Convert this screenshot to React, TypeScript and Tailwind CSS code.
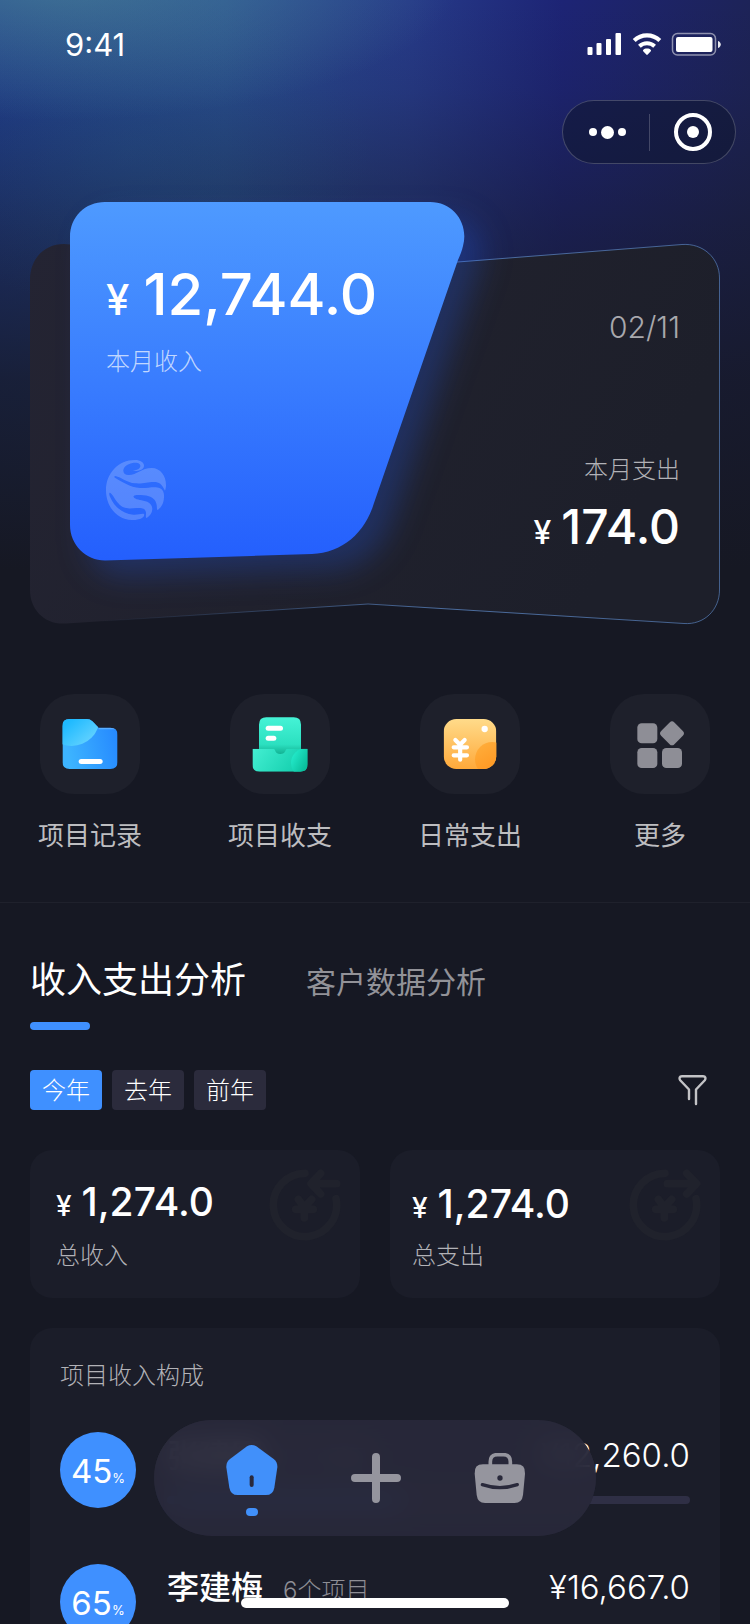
import type { ReactNode } from "react";

function StatusIcons() {
  return (
    <svg className="h-6 w-[136px]" viewBox="0 0 136 24" fill="none" aria-hidden="true">
      <g fill="#fff">
        <rect x="1.500" y="15" width="5" height="8" rx="1" />
        <rect x="10.500" y="11" width="5" height="12" rx="1" />
        <rect x="20" y="7" width="5" height="16" rx="1" />
        <rect x="29.500" y="1" width="5.500" height="22" rx="1" />
        <path d="M61 16.600c1.600 0 3 .5 3.800 1.300.4.400.4.900 0 1.300l-3.100 3.400c-.4.400-1 .4-1.400 0l-3.100-3.400c-.4-.4-.4-.9 0-1.300.8-.8 2.200-1.300 3.800-1.300z" />
      </g>
      <path d="M48.200 8.400a18.600 18.600 0 0 1 25.600 0" stroke="#fff" strokeWidth="4.200" />
      <path d="M53.400 14.200a11.200 11.200 0 0 1 15.200 0" stroke="#fff" strokeWidth="4" />
      <rect x="86.500" y="1.500" width="43" height="21.500" rx="5" stroke="#fff" strokeOpacity=".5" strokeWidth="1.500" />
      <rect x="90" y="5" width="36.500" height="15" rx="2" fill="#fff" />
      <path d="M132 9v7c1.800-.6 2.800-2 2.800-3.500S133.800 9.600 132 9z" fill="#fff" fillOpacity=".9" />
    </svg>
  );
}

function HeroShapes() {
  return (
    <svg
      className="absolute inset-0 h-full w-full overflow-visible"
      viewBox="0 0 690 422"
      preserveAspectRatio="none"
      aria-hidden="true"
    >
      <defs>
        <linearGradient id="back" x1="0" y1="0" x2="1" y2="0.3">
          <stop offset="0" stopColor="#242433" />
          <stop offset="0.55" stopColor="#20212d" />
          <stop offset="1" stopColor="#1d1f2a" />
        </linearGradient>
        <linearGradient id="edge" x1="0" y1="0" x2="1" y2="0">
          <stop offset="0.1" stopColor="#5b86c4" stopOpacity="0" />
          <stop offset="0.6" stopColor="#5b86c4" stopOpacity="0.75" />
          <stop offset="1" stopColor="#5b86c4" stopOpacity="0.65" />
        </linearGradient>
        <linearGradient id="front" x1="0" y1="0" x2="0" y2="1">
          <stop offset="0" stopColor="#4e9aff" />
          <stop offset="1" stopColor="#245ffd" />
        </linearGradient>
        <filter id="glow" x="-20%" y="-20%" width="150%" height="150%" colorInterpolationFilters="sRGB">
          <feDropShadow dx="18" dy="16" stdDeviation="15" floodColor="#2461ff" floodOpacity="0.25" />
        </filter>
      </defs>
      <path
        d="M0 78C0 57 14 42 34 42L338 67L652 42.500C673 41 689.500 56 689.500 76V388C689.500 408 674 423 654 421.500L338 402L36 421.500C15 423 0 408 0 388Z"
        fill="url(#back)"
        stroke="url(#edge)"
      />
      <path
        d="M75 0H400C424 0 439 22 433 44C432 49 430 53 428 58L344 301C335 331 312 351 282 352L75 358.500C56 358.500 40 343 40 323V35C40 15 55 0 75 0Z"
        fill="url(#front)"
        filter="url(#glow)"
      />
    </svg>
  );
}

function GlobeLogo() {
  return (
    <svg className="h-[60px] w-[60px]" viewBox="48 60 180 180" aria-hidden="true">
      <path
        fill="#fff"
        fillOpacity=".2"
        d="M48 150C48 100 85 60 135 60C152 60 162 68 162 77C162 88 148 94 128 93C145 90 152 84 151 77C150 68 135 68 128 69C110 72 100 82 100 92C100 100 106 105 116 105C140 105 155 84 185 84C212 84 228 108 228 135C228 142 227 147 225 152C215 132 208 126 192 126C170 126 160 132 135 130C110 128 95 112 76 108C72 108 72 112 76 114C95 125 120 142 150 144C175 145 195 138 210 145C220 150 223 160 222 172C221 190 215 202 203 210C200 210 201 200 200 195C197 178 185 168 160 166C150 165 135 164 131 168C128 176 145 180 160 182C178 184 187 195 187 208C186 220 180 228 170 234C166 234 168 226 168 218C167 206 158 203 140 204C115 206 100 208 85 190C75 180 68 162 60 158C57 158 57 164 60 170C70 195 95 222 130 224C145 225 155 220 162 222C165 228 158 234 150 237C140 240 130 240 125 240C80 238 48 200 48 150Z"
      />
    </svg>
  );
}

function FolderIcon() {
  return (
    <svg className="h-full w-full" viewBox="0 0 300 300" aria-hidden="true">
      <defs>
        <linearGradient id="folder" x1="0" y1="0.2" x2="1" y2="0">
          <stop offset="0" stopColor="#3db4ff" />
          <stop offset="1" stopColor="#2486ff" />
        </linearGradient>
        <linearGradient id="folderLight" gradientUnits="userSpaceOnUse" x1="80" y1="90" x2="140" y2="160">
          <stop offset="0" stopColor="#1fbaff" />
          <stop offset="1" stopColor="#66d3ff" />
        </linearGradient>
        <clipPath id="folderClip">
          <path d="M67 97Q67 75 89 75H140Q150 75 157 82L176 101H211Q233 101 233 123V203Q233 225 211 225H89Q67 225 67 203Z" />
        </clipPath>
      </defs>
      <g clipPath="url(#folderClip)">
        <rect x="67" y="75" width="166" height="150" fill="url(#folder)" />
        <path d="M176 101H233V106H176Z" fill="#7cc0ff" fillOpacity=".6" />
        <circle cx="95" cy="72" r="84" fill="url(#folderLight)" />
      </g>
      <rect x="116" y="195" width="72" height="15" rx="7.500" fill="#fff" />
    </svg>
  );
}

function TrayIcon() {
  return (
    <svg className="h-full w-full" viewBox="0 0 300 300" aria-hidden="true">
      <defs>
        <linearGradient id="sheet" x1="0" y1="0" x2="0" y2="1">
          <stop offset="0" stopColor="#45f3d6" />
          <stop offset="0.7" stopColor="#2ce0c0" />
          <stop offset="0.95" stopColor="#12b293" />
        </linearGradient>
        <linearGradient id="tray" x1="0" y1="0" x2="1" y2="0.3">
          <stop offset="0" stopColor="#44efd2" />
          <stop offset="1" stopColor="#14cfae" />
        </linearGradient>
        <linearGradient id="trayDot" gradientUnits="userSpaceOnUse" x1="185" y1="190" x2="233" y2="215">
          <stop offset="0" stopColor="#22e8c8" />
          <stop offset="1" stopColor="#08bb98" />
        </linearGradient>
        <clipPath id="trayClip">
          <path d="M67 164H130C137 164 134 180 151 180C168 180 165 164 172 164H233V211Q233 233 211 233H89Q67 233 67 211Z" />
        </clipPath>
      </defs>
      <path d="M87 92Q87 70 109 70H191Q213 70 213 92V186H87Z" fill="url(#sheet)" />
      <rect x="107" y="95" width="52" height="15" rx="7.500" fill="#fff" />
      <rect x="107" y="125" width="32" height="15" rx="7.500" fill="#fff" />
      <g clipPath="url(#trayClip)">
        <rect x="67" y="163" width="166" height="71" fill="url(#tray)" />
        <circle cx="228" cy="207" r="45" fill="url(#trayDot)" />
      </g>
    </svg>
  );
}

function DailyIcon() {
  return (
    <svg className="h-full w-full" viewBox="0 0 300 300" aria-hidden="true">
      <defs>
        <linearGradient id="daily" x1="0" y1="0" x2="0" y2="1">
          <stop offset="0" stopColor="#ffdb8a" />
          <stop offset="1" stopColor="#ffa93a" />
        </linearGradient>
        <linearGradient id="dailyDot" x1="0" y1="0" x2="0.6" y2="1">
          <stop offset="0" stopColor="#ffb03e" />
          <stop offset="1" stopColor="#ff921c" />
        </linearGradient>
        <clipPath id="dailyClip">
          <rect x="71" y="75" width="158" height="150" rx="38" />
        </clipPath>
      </defs>
      <g clipPath="url(#dailyClip)">
        <rect x="71" y="75" width="158" height="150" fill="url(#daily)" />
        <circle cx="217" cy="196" r="52" fill="url(#dailyDot)" />
      </g>
      <circle cx="194" cy="105" r="9.500" fill="#fff" />
      <path
        d="M106 138L120 152L134 138M101 160H141M101 184H141M120.500 152V197"
        stroke="#fff"
        strokeWidth="12.500"
        strokeLinecap="round"
        strokeLinejoin="round"
        fill="none"
      />
    </svg>
  );
}

function MoreIcon() {
  return (
    <svg className="h-full w-full" viewBox="0 0 300 300" fill="#8e8e96" aria-hidden="true">
      <rect x="82" y="88" width="60" height="60" rx="13" />
      <rect x="82" y="162" width="60" height="60" rx="13" />
      <rect x="156" y="162" width="60" height="60" rx="13" />
      <rect x="158" y="90" width="56" height="56" rx="10" transform="rotate(45 186 118)" />
    </svg>
  );
}

function FilterIcon() {
  return (
    <svg
      className="h-8 w-8"
      viewBox="0 0 32 32"
      fill="none"
      stroke="#c3c3c6"
      strokeWidth="2.400"
      strokeLinecap="round"
      strokeLinejoin="round"
      aria-hidden="true"
    >
      <path d="M13 25V15.500L4.200 6.200C2.900 4.400 3.500 2.200 5.900 2.200H27.100C29.500 2.200 30.100 4.400 28.800 6.200L20 15.500V30" />
    </svg>
  );
}

function FlowIcon({ outward }: { outward: boolean }) {
  return (
    <svg
      className="absolute top-[19px] right-[19px] h-[72px] w-[72px]"
      viewBox="57 57 216 216"
      fill="none"
      stroke="#20222c"
      strokeWidth="23"
      strokeLinecap="round"
      strokeLinejoin="round"
      aria-hidden="true"
    >
      <path d="M165 70A95 95 0 1 0 258 146" />
      <path d={outward ? "M172 101H258M230 70L260 101L230 132" : "M260 101H186M212 70L183 101L212 132"} />
      <path d="M145 148L163 172L185 148M137 178H190M163 178V204" />
    </svg>
  );
}

function Money({ value, size }: { value: string; size: "lg" | "md" | "sm" }) {
  const styles = {
    lg: { row: "h-[60px] gap-[14px] leading-[60px]", sign: "text-[42px]", number: "text-[58px]" },
    md: { row: "h-12 gap-[10px] leading-[48px]", sign: "text-[32px]", number: "text-[48px]" },
    sm: { row: "h-12 gap-[10px] leading-[48px]", sign: "text-[28px]", number: "text-[39px]" },
  }[size];
  return (
    <p className={`flex items-baseline font-medium text-white ${styles.row}`}>
      <span className={styles.sign}>¥</span>
      <span className={styles.number}>{value}</span>
    </p>
  );
}

function Shortcut({ label, children }: { label: string; children: ReactNode }) {
  return (
    <button type="button" className="flex w-[104px] flex-col items-center gap-[26px]">
      <span className="h-[100px] w-[100px] rounded-[34px] bg-[#1e202b]">{children}</span>
      <span className="text-[26px] leading-8 text-[#bdbdc0]">{label}</span>
    </button>
  );
}

function StatCard({ label, value, outward }: { label: string; value: string; outward: boolean }) {
  return (
    <div
      className={`relative h-[148px] rounded-[22px] bg-[#1b1d29] ${outward ? "pt-[30px] pl-[22px]" : "pt-7 pl-[26px]"}`}
    >
      <Money value={value} size="sm" />
      <p className={`text-[24px] leading-8 font-light text-[#b2b2b7] ${outward ? "mt-3" : "mt-[14px]"}`}>{label}</p>
      <FlowIcon outward={outward} />
    </div>
  );
}

interface Project {
  percent: number;
  name: string;
  count: string;
  amount: string;
}

const projects: Project[] = [
  { percent: 45, name: "张建国", count: "8个项目", amount: "¥12,260.0" },
  { percent: 65, name: "李建梅", count: "6个项目", amount: "¥16,667.0" },
];

function ProjectRow({ project }: { project: Project }) {
  return (
    <li className="flex gap-[31px]">
      <div className="flex h-[76px] w-[76px] shrink-0 items-baseline justify-center rounded-full bg-[#3f90ff] leading-[78px] text-white">
        <span className="text-[33px]">{project.percent}</span>
        <span className="text-[13px]">%</span>
      </div>
      <div className="flex-1">
        <div className="flex h-[46px] items-baseline leading-[46px]">
          <span className="text-[32px] font-medium text-white">{project.name}</span>
          <span className="ml-5 text-[24px] font-light text-[#8e8e95]">{project.count}</span>
          <span className="ml-auto text-[33px] font-light text-white">{project.amount}</span>
        </div>
        <div className="mt-[18px] h-2 rounded-full bg-[#2f2f45]">
          <div className="h-full rounded-full bg-[#3f90ff]" style={{ width: `${project.percent}%` }} />
        </div>
      </div>
    </li>
  );
}

export default function App() {
  return (
    <div className="relative h-screen overflow-hidden bg-[#161823] bg-[radial-gradient(400px_140px_at_60px_-20px,rgba(82,146,150,0.6),rgba(82,146,150,0)),radial-gradient(240px_160px_at_130px_150px,rgba(36,92,130,0.22),rgba(36,92,130,0)),linear-gradient(180deg,rgba(22,24,35,0)_0px,rgba(22,24,35,0.12)_90px,rgba(22,24,35,0.48)_230px,rgba(22,24,35,0.8)_380px,rgba(22,24,35,1)_570px),linear-gradient(90deg,#203d90_0%,#284c92_30%,#263a88_55%,#1d2475_75%,#1d2358_100%)] font-['Inter','Noto_Sans_CJK_SC',sans-serif]">
      <div className="h-full overflow-y-auto [scrollbar-width:none]">
        <header>
          <div className="flex h-[100px] items-start justify-between pt-[29px] pr-7 pl-[65px]">
            <time className="text-[31px] leading-[31px] text-white">9:41</time>
            <div className="pt-[3px]">
              <StatusIcons />
            </div>
          </div>
          <div className="flex justify-end pr-[14px]">
            <div className="flex h-16 w-[174px] items-center rounded-full border border-white/20 bg-[#111733]/60">
              <button type="button" aria-label="菜单" className="flex w-[86px] items-center justify-center gap-1 pl-[3px]">
                <span className="h-2 w-2 rounded-full bg-white" />
                <span className="h-[13px] w-[13px] rounded-full bg-white" />
                <span className="h-2 w-2 rounded-full bg-white" />
              </button>
              <span className="h-[37px] w-px bg-white/20" />
              <button type="button" aria-label="关闭" className="flex flex-1 items-center justify-center">
                <span className="flex h-[38px] w-[38px] items-center justify-center rounded-full border-4 border-white">
                  <span className="h-3 w-3 rounded-full bg-white" />
                </span>
              </button>
            </div>
          </div>
        </header>

        <main>
          <section className="relative mx-[30px] mt-[38px] flex h-[422px] justify-between pr-10 pl-[76px]">
            <HeroShapes />
            <div className="relative flex flex-col pt-[62px] pb-[104px]">
              <Money value="12,744.0" size="lg" />
              <p className="mt-[22px] text-[24px] leading-8 font-light text-white/70">本月收入</p>
              <div className="mt-auto">
                <GlobeLogo />
              </div>
            </div>
            <div className="relative flex flex-col items-end pt-[109px] pb-[73px]">
              <p className="text-[30px] leading-8 font-light text-[#a8a8ad]">02/11</p>
              <p className="mt-auto text-[24px] leading-8 font-light text-[#b2b2b7]">本月支出</p>
              <div className="mt-[17px]">
                <Money value="174.0" size="md" />
              </div>
            </div>
          </section>

          <nav className="mt-[70px] flex justify-between px-[38px]">
            <Shortcut label="项目记录">
              <FolderIcon />
            </Shortcut>
            <Shortcut label="项目收支">
              <TrayIcon />
            </Shortcut>
            <Shortcut label="日常支出">
              <DailyIcon />
            </Shortcut>
            <Shortcut label="更多">
              <MoreIcon />
            </Shortcut>
          </nav>

          <section className="mt-[50px] border-t border-[#1f212c] px-[30px] pt-[53px]">
            <div className="flex items-baseline gap-[60px]">
              <button type="button" className="flex flex-col items-start gap-[18px]">
                <span className="text-[36px] leading-[48px] text-white">收入支出分析</span>
                <span className="h-2 w-[60px] rounded-full bg-[#3f90ff]" />
              </button>
              <button type="button" className="text-[30px] leading-[48px] text-[#929298]">
                客户数据分析
              </button>
            </div>

            <div className="mt-10 flex items-center justify-between">
              <div className="flex h-10 gap-[10px] text-[24px] leading-[42px] font-light text-white">
                <button type="button" className="w-[72px] rounded bg-[#3f90ff]">
                  今年
                </button>
                <button type="button" className="w-[72px] rounded bg-[#2b2b3c]">
                  去年
                </button>
                <button type="button" className="w-[72px] rounded bg-[#2b2b3c]">
                  前年
                </button>
              </div>
              <button type="button" aria-label="筛选" className="mr-3">
                <FilterIcon />
              </button>
            </div>

            <div className="mt-10 grid grid-cols-2 gap-[30px]">
              <StatCard label="总收入" value="1,274.0" outward={false} />
              <StatCard label="总支出" value="1,274.0" outward />
            </div>

            <div className="mt-[30px] rounded-[22px] bg-[#1b1d29] px-[30px] pt-8 pb-[160px]">
              <h2 className="text-[24px] leading-8 font-light text-[#b2b2b7]">项目收入构成</h2>
              <ul className="mt-10 flex flex-col gap-14">
                {projects.map((project) => (
                  <ProjectRow key={project.name} project={project} />
                ))}
              </ul>
            </div>
          </section>
        </main>
      </div>

      <nav className="absolute bottom-[88px] left-1/2 flex h-[116px] w-[442px] -translate-x-1/2 items-center justify-between rounded-full bg-[#29293b]/90 pr-[70px] pl-[72px] backdrop-blur-[14px]">
        <button type="button" aria-label="首页" className="mt-1 flex flex-col items-center gap-[13px]">
          <svg className="h-[50px] w-[52px]" viewBox="49 90 156 150" aria-hidden="true">
            <path
              d="M112 94Q126 86 140 94L192 132Q204 141 203 157L194 218Q190 240 169 240H84Q63 240 59 218L50 157Q49 141 61 132Z"
              fill="#4190fa"
            />
            <rect x="120" y="181" width="12" height="35" rx="6" fill="#29293b" />
          </svg>
          <span className="h-2 w-3 rounded-full bg-[#4190fa]" />
        </button>
        <button type="button" aria-label="新增">
          <svg className="h-[50px] w-[50px]" viewBox="0 0 50 50" aria-hidden="true">
            <path d="M25 4V46M4 25H46" stroke="#95959e" strokeWidth="8" strokeLinecap="round" />
          </svg>
        </button>
        <button type="button" aria-label="工作">
          <svg className="h-[50px] w-[52px]" viewBox="793 114 156 150" fill="none" aria-hidden="true">
            <path d="M842 152V140Q842 119 863 119H881Q902 119 902 140V152" stroke="#95959e" strokeWidth="11" />
            <path
              d="M820 148H921Q948 148 946 176L940 240Q937 264 915 264H826Q804 264 801 240L795 176Q793 148 820 148Z"
              fill="#95959e"
            />
            <circle cx="871" cy="189" r="8" fill="#29293b" />
            <path d="M818 209Q871 227 923 209" stroke="#29293b" strokeWidth="10" strokeLinecap="round" />
          </svg>
        </button>
      </nav>
      <div className="absolute bottom-4 left-1/2 h-[10px] w-[268px] -translate-x-1/2 rounded-full bg-white" />
    </div>
  );
}
